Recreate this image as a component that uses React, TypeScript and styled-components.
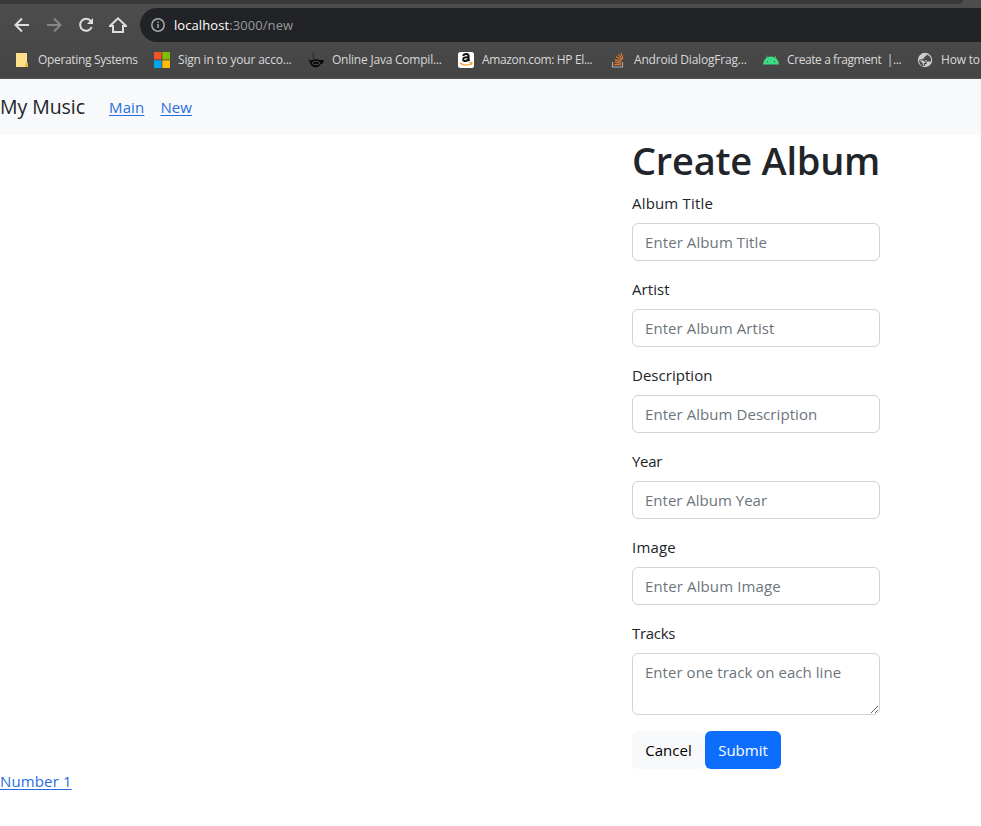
import React from 'react';
import styled, { createGlobalStyle } from 'styled-components';

const GlobalStyle = createGlobalStyle`
  * { box-sizing: border-box; }
  body {
    margin: 0;
    background: #fff;
    color: #212529;
    font-family: "Open Sans", "Noto Sans", sans-serif;
    font-size: 15px;
    line-height: 24px;
    overflow: hidden;
  }
`;

const Page = styled.div`
  width: 981px;
  height: 826px;
  overflow: hidden;
  display: flex;
  flex-direction: column;
`;

const Chrome = styled.header`
  height: 79px;
  flex: none;
  background: linear-gradient(#4d4d4d, #454545);
  border-bottom: 1px solid #545454;
  display: flex;
  flex-direction: column;
`;

const TabEdge = styled.div`
  height: 4px;
  width: 963px;
  background: #383838;
  border-bottom-right-radius: 5px;
`;

const Toolbar = styled.div`
  height: 38px;
  padding: 4px 0 0 13px;
  display: flex;
`;

const ToolIcon = styled.svg`
  width: 18px;
  height: 18px;
  margin: 8px 14px 0 0;
  flex: none;
  fill: none;
  stroke: ${(p) => p.color};
  stroke-width: 2;
`;

const AddressBar = styled.div`
  flex: 1;
  height: 34px;
  margin-left: -1px;
  border-radius: 17px 0 0 17px;
  background: #222327;
  display: flex;
  align-items: center;
  padding-left: 10px;
`;

const InfoIcon = styled.svg`
  width: 16px;
  height: 16px;
  margin-right: 8px;
`;

const Address = styled.span`
  color: #989a9e;
  font-size: 13px;
  line-height: 20px;
  letter-spacing: 0.08px;
`;

const Host = styled.span`
  color: #fff;
`;

const Bookmarks = styled.nav`
  height: 36px;
  display: flex;
  align-items: center;
  padding-left: 14px;
`;

const Bookmark = styled.div<{ $width: number }>`
  width: ${(p) => p.$width}px;
  flex: none;
  display: flex;
  align-items: center;
`;

const BookmarkIcon = styled.svg`
  width: 16px;
  height: 16px;
  margin-right: 8px;
  flex: none;
`;

const BookmarkName = styled.span<{ $spacing: number }>`
  font-size: 12px;
  line-height: 18px;
  color: #d8d8d8;
  white-space: pre;
  letter-spacing: ${(p) => p.$spacing}px;
`;

const Navbar = styled.nav`
  height: 56px;
  flex: none;
  background: #f8f9fa;
  display: flex;
  align-items: center;
`;

const Brand = styled.span`
  width: 109px;
  font-size: 19.5px;
  line-height: 30px;
  letter-spacing: -0.05px;
`;

const Link = styled.a`
  color: #2a6de0;
  text-decoration: underline;
  text-underline-offset: 2px;
  margin-right: 16px;
  letter-spacing: 0.14px;
`;

const Form = styled.form`
  width: 248px;
  margin-left: 632px;
  flex: none;
  display: flex;
  flex-direction: column;
`;

const Title = styled.h1`
  margin: 1px 0 9px;
  height: 46px;
  font-size: 38px;
  line-height: 48px;
  font-weight: 600;
  letter-spacing: -0.24px;
  white-space: nowrap;
`;

const Group = styled.div`
  margin-bottom: 16px;
  display: flex;
  flex-direction: column;
`;

const Label = styled.label<{ $spacing: number }>`
  height: 24px;
  margin-bottom: 8px;
  letter-spacing: ${(p) => p.$spacing}px;
`;

const Input = styled.input<{ $spacing: number }>`
  width: 248px;
  height: 38px;
  padding: 6px 12px;
  border: 1px solid #ced4da;
  border-radius: 6px;
  font: inherit;
  background: #fff;
  outline: none;
  &::placeholder { color: #6c757d; opacity: 1; letter-spacing: ${(p) => p.$spacing}px; }
`;

const TextArea = styled(Input).attrs({ as: 'textarea' })`
  height: 62px;
  resize: vertical;
  overflow: hidden;
`;

const Buttons = styled.div`
  display: flex;
`;

const Button = styled.button<{ $primary?: boolean; $width: number }>`
  width: ${(p) => p.$width}px;
  height: 38px;
  padding: 0;
  border: 0;
  border-radius: 6px;
  font: inherit;
  color: ${(p) => (p.$primary ? '#fff' : '#000')};
  background: ${(p) => (p.$primary ? '#0d6efd' : '#f8f9fa')};
`;

const Footer = styled.div`
  height: 24px;
`;

const NoteIcon = () => (
  <BookmarkIcon viewBox="0 0 16 16">
    <path d="M2 1h11v10l1 1v3H2z" fill="#ffe08a" />
    <path d="M11 15v-3l2-2 1 2v3z" fill="#e8bd45" />
  </BookmarkIcon>
);
const MicrosoftIcon = () => (
  <BookmarkIcon viewBox="0 0 16 16">
    <path d="M0 0h7.500v7.500H0z" fill="#f35325" />
    <path d="M8.300 0H16v7.500H8.300z" fill="#81bc06" />
    <path d="M0 8.300h7.500V16H0z" fill="#05a6f0" />
    <path d="M8.300 8.300H16V16H8.300z" fill="#ffba08" />
  </BookmarkIcon>
);
const CupIcon = () => (
  <BookmarkIcon viewBox="0 0 16 16">
    <path d="M3.500.500c4 1.500.500 3.500 2.500 7" stroke="#1c1c1c" strokeWidth=".9" fill="none" />
    <path d="M.500 7.500 3 8.500c3-1.500 7-1.500 9.500-.5L15.800 8c0 2.500-1 4-3.500 4.500C10.500 16.500 5 16 3 13z" fill="#0c0c0c" />
    <ellipse cx="8" cy="11" rx="3.800" ry="1.700" fill="none" stroke="#555" strokeWidth=".8" />
  </BookmarkIcon>
);
const AmazonIcon = () => (
  <BookmarkIcon viewBox="0 0 16 16">
    <rect width="16" height="16" rx="2.500" fill="#fff" />
    <path d="M5.200 4Q5.700 2.100 8.200 2.100q2.400 0 2.400 2.200v3.500l.9 1.200M10.200 5.200C6.700 5 5.200 5.900 5.200 7.400c0 2.400 4 2.300 5.100-.4" fill="none" stroke="#111" strokeWidth="2" />
    <path d="M2 11q5.500 4 11 .8M11.500 10.500h2.500l-.6 2.500" fill="none" stroke="#f5a02c" strokeWidth="1.200" />
  </BookmarkIcon>
);
const StackIcon = () => (
  <BookmarkIcon viewBox="0 0 16 16">
    <path d="M2.500 10v5h10v-5" fill="none" stroke="#a9a9a9" strokeWidth="1.200" />
    <path d="M4.300 12.700h6.500M4.500 10.200l6.300 1.200M5 7.600l6 2.300M6.300 4.600l5.200 4M8.500 2.300l3.800 5.300M11.200.8l1.600 6" stroke="#d9782d" strokeWidth="1.200" />
  </BookmarkIcon>
);
const AndroidIcon = () => (
  <BookmarkIcon viewBox="0 0 16 16">
    <path d="M0 12.500a8 8 0 0 1 16 0z" fill="#3ddc84" />
    <path d="m3 3.500 2 3.500M13 3.500l-2 3.500" stroke="#3ddc84" strokeWidth=".8" />
    <circle cx="4.500" cy="9.600" r=".7" fill="#1e6041" />
    <circle cx="11.500" cy="9.600" r=".7" fill="#1e6041" />
  </BookmarkIcon>
);
const GlobeIcon = () => (
  <BookmarkIcon viewBox="0 0 16 16">
    <circle cx="8" cy="8" r="7.200" fill="#ccc" />
    <path d="M9.500 2.500v1.300L7.300 5v1.500H5.500V8H9l1.200 1.500H14a6 6 0 0 0-4.500-7z" fill="#484848" />
    <path d="M2 8l3.500 3v1.200l1.300 1.300v.7A6.200 6.200 0 0 1 2 8z" fill="#484848" />
    <path d="M2.500 8h4l2.500 2v1.500H7.500v2" fill="none" stroke="#484848" strokeWidth="1.200" />
  </BookmarkIcon>
);

const bookmarks = [
  { name: 'Operating Systems', icon: NoteIcon, width: 140, spacing: -0.34 },
  { name: 'Sign in to your acco...', icon: MicrosoftIcon, width: 154, spacing: -0.2 },
  { name: 'Online Java Compil...', icon: CupIcon, width: 150, spacing: -0.22 },
  { name: 'Amazon.com: HP El...', icon: AmazonIcon, width: 152, spacing: -0.35 },
  { name: 'Android DialogFrag...', icon: StackIcon, width: 153, spacing: -0.2 },
  { name: 'Create a fragment  |...', icon: AndroidIcon, width: 154, spacing: -0.41 },
  { name: 'How to', icon: GlobeIcon, width: 80, spacing: -0.2 },
];

const fields = [
  { label: 'Album Title', hint: 'Enter Album Title', labelSpacing: 0.18, spacing: 0.09 },
  { label: 'Artist', hint: 'Enter Album Artist', labelSpacing: 0.06, spacing: 0.08 },
  { label: 'Description', hint: 'Enter Album Description', labelSpacing: 0.03, spacing: 0.06 },
  { label: 'Year', hint: 'Enter Album Year', labelSpacing: -0.3, spacing: 0 },
  { label: 'Image', hint: 'Enter Album Image', labelSpacing: 0.2, spacing: 0.12 },
];

export default function App() {
  return (
    <Page>
      <GlobalStyle />
      <Chrome>
        <TabEdge />
        <Toolbar>
          <ToolIcon viewBox="0 0 18 18" color="#dedede"><path d="M16 9H3M9 2.500 2.500 9 9 15.500" /></ToolIcon>
          <ToolIcon viewBox="0 0 18 18" color="#858585"><path d="M2 9h13M9 2.500 15.500 9 9 15.500" /></ToolIcon>
          <ToolIcon viewBox="0 0 18 18" color="#dedede">
            <path d="M13.800 5A6 6 0 1 0 14.700 11" />
            <path d="M16 2v6h-6z" fill="#dedede" stroke="none" />
          </ToolIcon>
          <ToolIcon viewBox="0 0 18 18" color="#dedede"><path d="M1 10h3v6h10v-6h3L9 2.300z" /></ToolIcon>
          <AddressBar>
            <InfoIcon viewBox="0 0 16 16" fill="none" stroke="#a6a8ac" strokeWidth="1.500">
              <circle cx="8" cy="8" r="6.200" />
              <path d="M8 7v4M8 4.500V6" />
            </InfoIcon>
            <Address><Host>localhost</Host>:3000/new</Address>
          </AddressBar>
        </Toolbar>
        <Bookmarks>
          {bookmarks.map(({ name, icon: Icon, width, spacing }) => (
            <Bookmark key={name} $width={width}>
              <Icon />
              <BookmarkName $spacing={spacing}>{name}</BookmarkName>
            </Bookmark>
          ))}
        </Bookmarks>
      </Chrome>
      <Navbar>
        <Brand>My Music</Brand>
        <Link href="#main">Main</Link>
        <Link href="#new">New</Link>
      </Navbar>
      <Form>
        <Title>Create Album</Title>
        {fields.map((f) => (
          <Group key={f.label}>
            <Label $spacing={f.labelSpacing}>{f.label}</Label>
            <Input placeholder={f.hint} $spacing={f.spacing} />
          </Group>
        ))}
        <Group>
          <Label $spacing={-0.3}>Tracks</Label>
          <TextArea placeholder="Enter one track on each line" $spacing={0.04} />
        </Group>
        <Buttons>
          <Button type="button" $width={73}>Cancel</Button>
          <Button type="button" $primary $width={76}>Submit</Button>
        </Buttons>
      </Form>
      <Footer><Link href="#1">Number 1</Link></Footer>
    </Page>
  );
}
